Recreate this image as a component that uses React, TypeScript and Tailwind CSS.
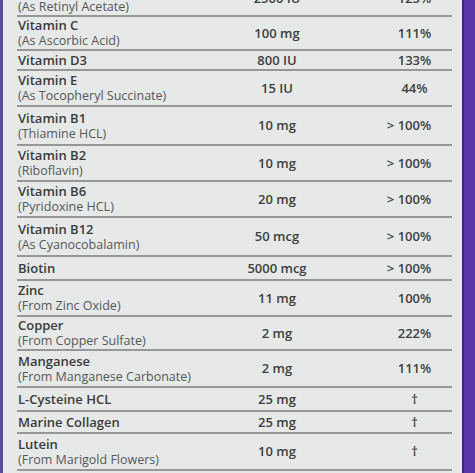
import React from "react"

type Row = {
  name: string
  source?: string
  amount: string
  dv: string
  h: string
}

// Heights are line-to-line distances measured from the label
const ROWS: Row[] = [
  { name: "Vitamin A", source: "(As Retinyl Acetate)", amount: "2500 IU", dv: "125%", h: "h-[35px]" },
  { name: "Vitamin C", source: "(As Ascorbic Acid)", amount: "100 mg", dv: "111%", h: "h-[34px]" },
  { name: "Vitamin D3", amount: "800 IU", dv: "133%", h: "h-[20px]" },
  { name: "Vitamin E", source: "(As Tocopheryl Succinate)", amount: "15 IU", dv: "44%", h: "h-[36px]" },
  { name: "Vitamin B1", source: "(Thiamine HCL)", amount: "10 mg", dv: "> 100%", h: "h-[39px]" },
  { name: "Vitamin B2", source: "(Riboflavin)", amount: "10 mg", dv: "> 100%", h: "h-[36px]" },
  { name: "Vitamin B6", source: "(Pyridoxine HCL)", amount: "20 mg", dv: "> 100%", h: "h-[36px]" },
  { name: "Vitamin B12", source: "(As Cyanocobalamin)", amount: "50 mcg", dv: "> 100%", h: "h-[39px]" },
  { name: "Biotin", amount: "5000 mcg", dv: "> 100%", h: "h-[24px]" },
  { name: "Zinc", source: "(From Zinc Oxide)", amount: "11 mg", dv: "100%", h: "h-[36px]" },
  { name: "Copper", source: "(From Copper Sulfate)", amount: "2 mg", dv: "222%", h: "h-[34px]" },
  { name: "Manganese", source: "(From Manganese Carbonate)", amount: "2 mg", dv: "111%", h: "h-[37px]" },
  { name: "L-Cysteine HCL", amount: "25 mg", dv: "†", h: "h-[24px]" },
  { name: "Marine Collagen", amount: "25 mg", dv: "†", h: "h-[22px]" },
  { name: "Lutein", source: "(From Marigold Flowers)", amount: "10 mg", dv: "†", h: "h-[37px]" },
]

export default function App() {
  return (
    <div className="flex h-[473px] w-[475px] overflow-hidden bg-[#e6e9e8] font-['Open_Sans',sans-serif]">
      {/* left edge of the box */}
      <div className="w-[3px] shrink-0 bg-[#5d4b9b]" />

      <div className="w-[435px] shrink-0 ml-[14px] -mt-[18px]">
        {ROWS.map((row) => (
          <div
            key={row.name}
            className={`${row.h} grid grid-cols-[210px_100px_1fr] items-center border-b-2 border-[#959897] box-border`}
          >
            <div className="flex flex-col pl-[1px]">
              <span className="text-[13px] leading-[15px] font-semibold text-[#3a3b3b]">{row.name}</span>
              {row.source && (
                <span className="text-[12.5px] leading-[15px] text-[#555857]">{row.source}</span>
              )}
            </div>
            <div className="text-center text-[13px] leading-[15px] font-semibold text-[#3d3e3e]">{row.amount}</div>
            <div
              className={`pl-[50px] text-center text-[13px] leading-[15px] font-semibold text-[#3d3e3e] ${
                row.dv.startsWith(">") ? "pr-[11px]" : ""
              }`}
            >
              {row.dv}
            </div>
          </div>
        ))}
      </div>

      {/* right purple side */}
      <div className="ml-[10px] w-[13px] shrink-0 bg-[#5a35a8] border-l-2 border-[#3f2580]" />
    </div>
  )
}
